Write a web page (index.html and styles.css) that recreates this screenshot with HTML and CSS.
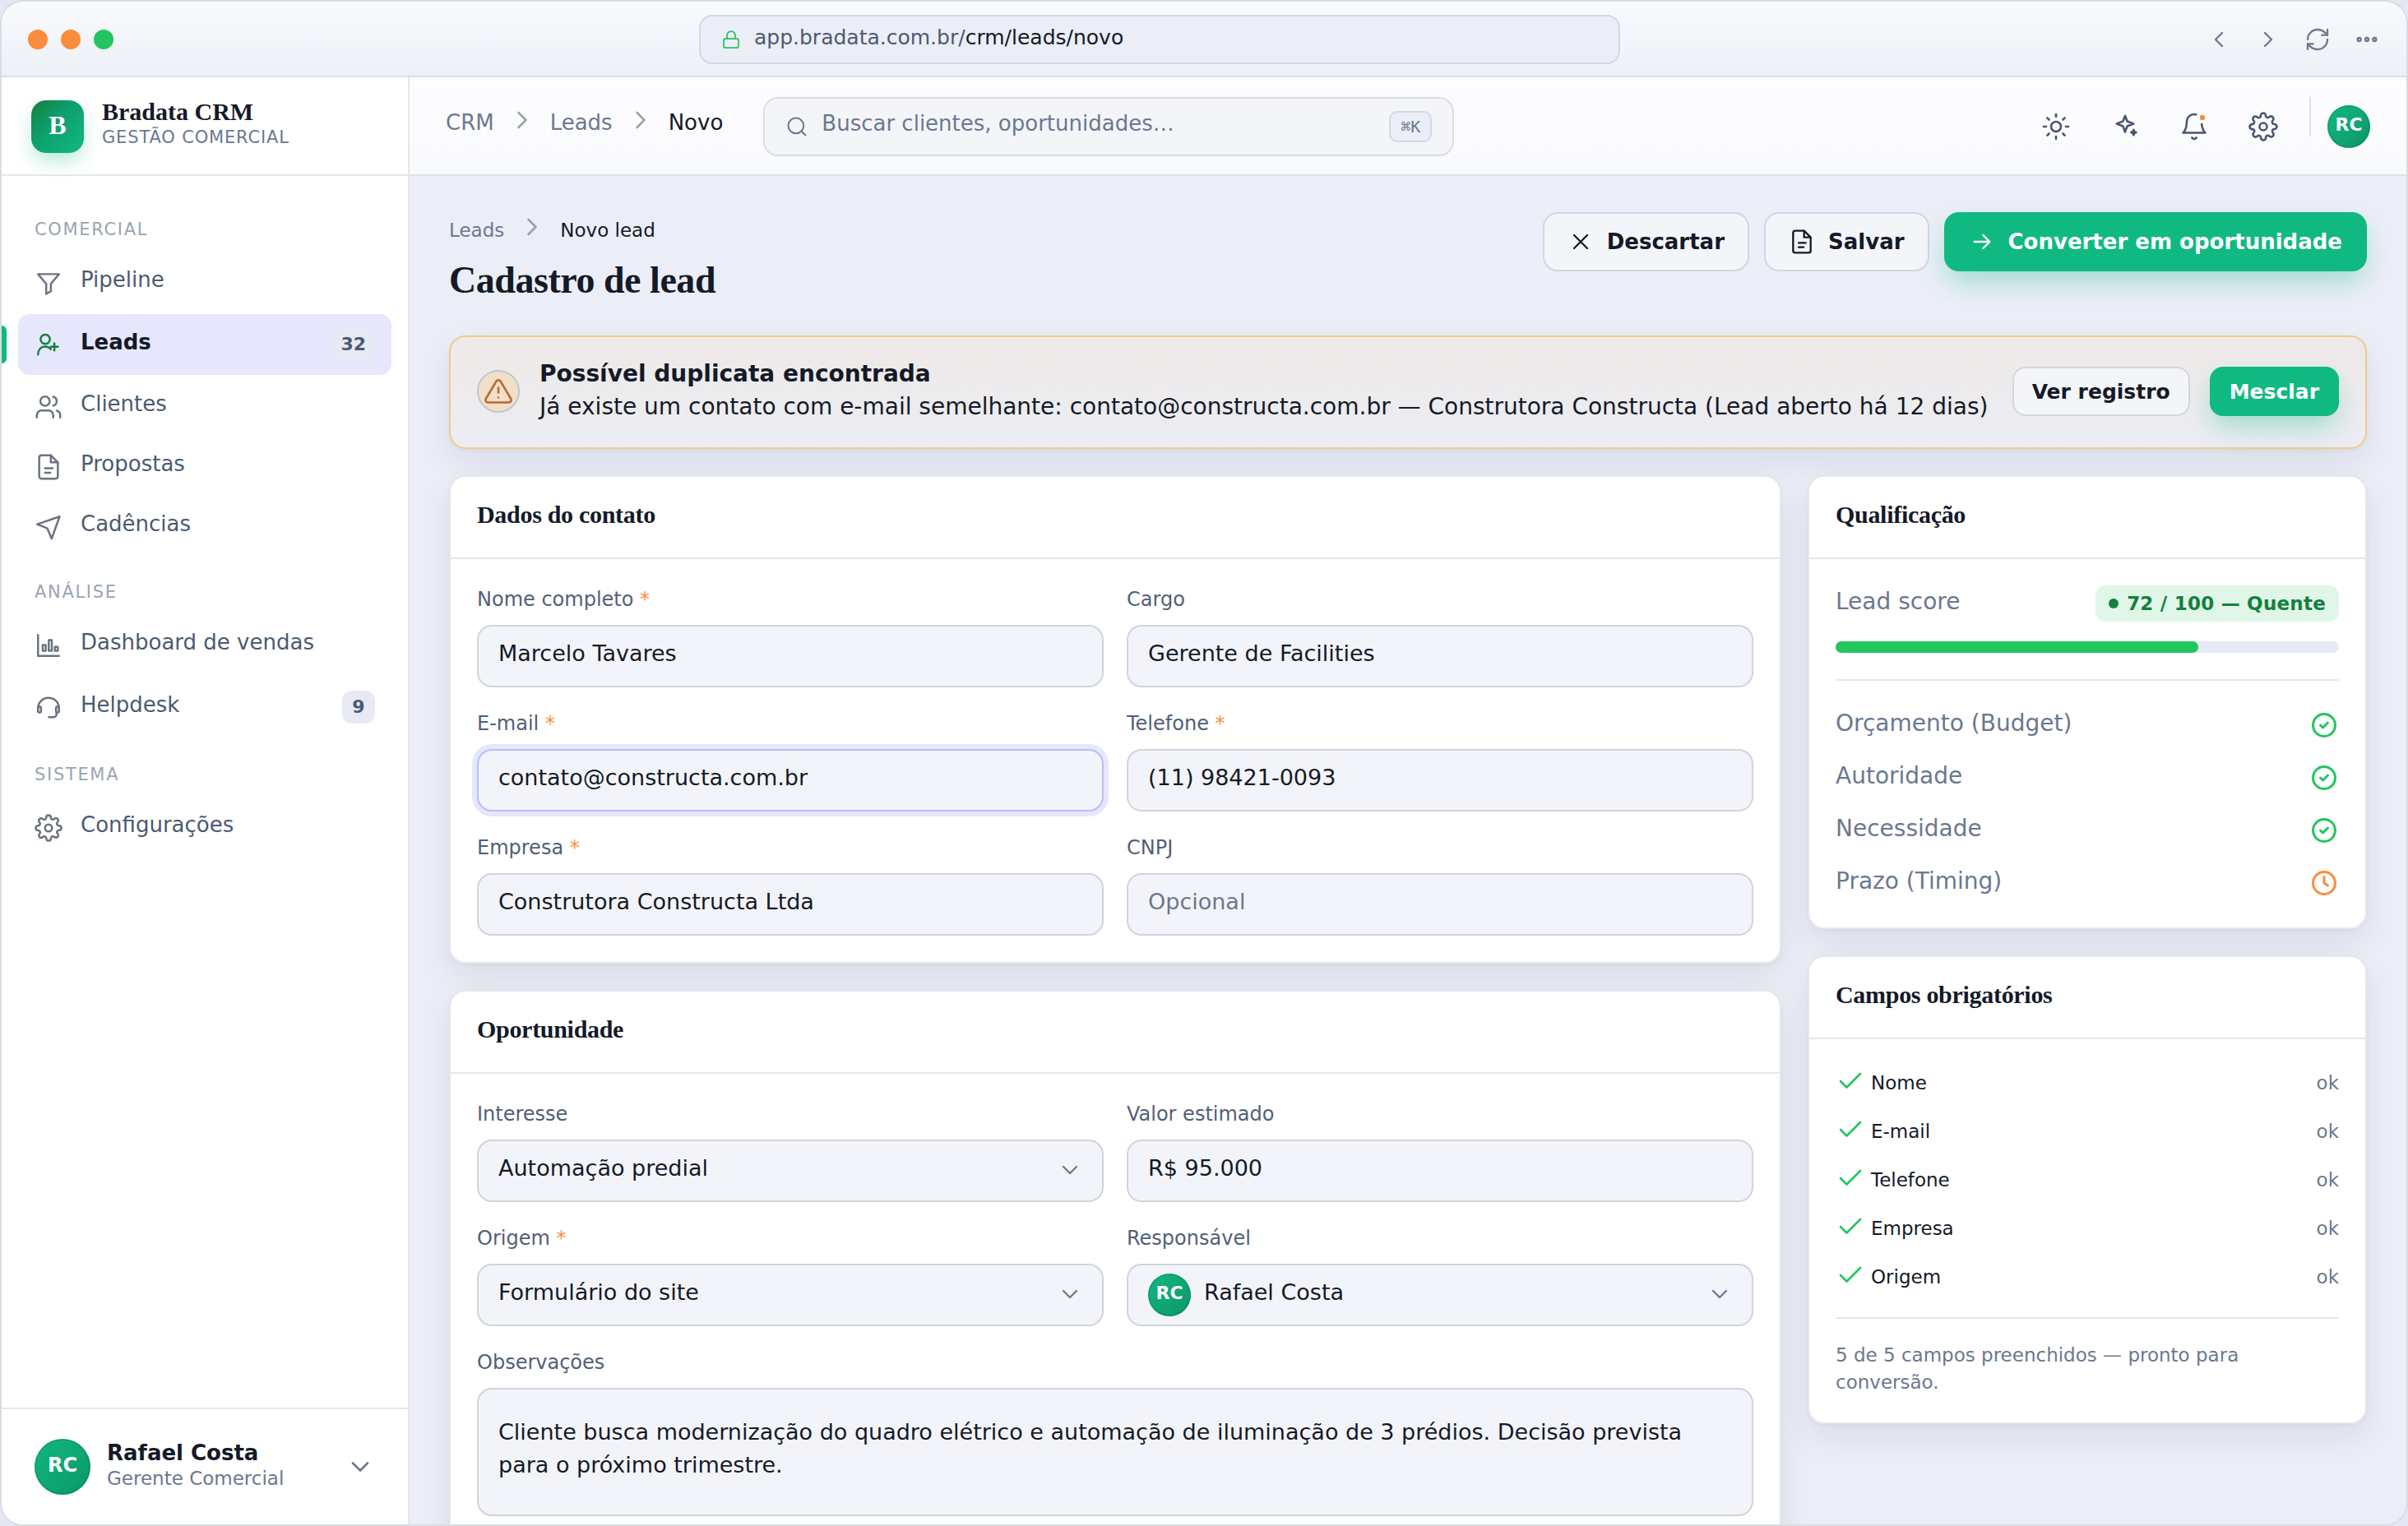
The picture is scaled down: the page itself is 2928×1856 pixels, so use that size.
FILE: index.html
```html
<!DOCTYPE html>
<html lang="pt-BR">
  <head>
    <meta charset="UTF-8" />
    <meta name="viewport" content="width=device-width, initial-scale=1.0" />
    <title>Bradata CRM - Novo lead</title>
    <link rel="stylesheet" href="styles.css">
  </head>
  <body>
    <!-- icon sprite -->
    <svg class="sprite" aria-hidden="true">
      <symbol id="i-lock" viewBox="0 0 24 24"><rect x="3" y="11" width="18" height="11" rx="2"/><path d="M7 11V7a5 5 0 0 1 10 0v4"/></symbol>
      <symbol id="i-left" viewBox="0 0 24 24"><path d="m15 18-6-6 6-6"/></symbol>
      <symbol id="i-right" viewBox="0 0 24 24"><path d="m9 18 6-6-6-6"/></symbol>
      <symbol id="i-down" viewBox="0 0 24 24"><path d="m6 9 6 6 6-6"/></symbol>
      <symbol id="i-refresh" viewBox="0 0 24 24"><path d="M3 12a9 9 0 0 1 9-9 9.75 9.75 0 0 1 6.74 2.74L21 8"/><path d="M21 3v5h-5"/><path d="M21 12a9 9 0 0 1-9 9 9.75 9.75 0 0 1-6.74-2.74L3 16"/><path d="M8 16H3v5"/></symbol>
      <symbol id="i-more" viewBox="0 0 24 24"><circle cx="5" cy="12" r="1.5"/><circle cx="12" cy="12" r="1.5"/><circle cx="19" cy="12" r="1.5"/></symbol>
      <symbol id="i-search" viewBox="0 0 24 24"><circle cx="11" cy="11" r="8"/><path d="m21 21-4.3-4.3"/></symbol>
      <symbol id="i-sun" viewBox="0 0 24 24"><circle cx="12" cy="12" r="4"/><path d="M12 2v2M12 20v2M4.93 4.93l1.41 1.41M17.66 17.66l1.41 1.41M2 12h2M20 12h2M6.34 17.66l-1.41 1.41M19.07 4.93l-1.41 1.41"/></symbol>
      <symbol id="i-spark" viewBox="0 0 24 24"><path d="M12 3.2l1.7 4.5 5.1 2-5.1 2-1.7 4.6-1.7-4.6-5.1-2 5.1-2z"/><path d="M18.9 14.6l.6 1.5 1.5.6-1.5.6-.6 1.5-.6-1.5-1.5-.6 1.5-.6z"/></symbol>
      <symbol id="i-bell" viewBox="0 0 24 24"><path d="M18 8A6 6 0 0 0 6 8c0 7-3 9-3 9h18s-3-2-3-9"/><path d="M13.73 21a2 2 0 0 1-3.46 0"/></symbol>
      <symbol id="i-gear" viewBox="0 0 24 24"><circle cx="12" cy="12" r="3"/><path d="M19.4 15a1.65 1.65 0 0 0 .33 1.82l.06.06a2 2 0 0 1 0 2.83 2 2 0 0 1-2.83 0l-.06-.06a1.65 1.65 0 0 0-1.82-.33 1.65 1.65 0 0 0-1 1.51V21a2 2 0 0 1-2 2 2 2 0 0 1-2-2v-.09A1.65 1.65 0 0 0 9 19.4a1.65 1.65 0 0 0-1.82.33l-.06.06a2 2 0 0 1-2.83 0 2 2 0 0 1 0-2.83l.06-.06a1.65 1.65 0 0 0 .33-1.82 1.65 1.65 0 0 0-1.51-1H3a2 2 0 0 1-2-2 2 2 0 0 1 2-2h.09A1.65 1.65 0 0 0 4.6 9a1.65 1.65 0 0 0-.33-1.82l-.06-.06a2 2 0 0 1 0-2.83 2 2 0 0 1 2.83 0l.06.06a1.65 1.65 0 0 0 1.82.33H9a1.65 1.65 0 0 0 1-1.51V3a2 2 0 0 1 2-2 2 2 0 0 1 2 2v.09a1.65 1.65 0 0 0 1 1.51 1.65 1.65 0 0 0 1.82-.33l.06-.06a2 2 0 0 1 2.83 0 2 2 0 0 1 0 2.83l-.06.06a1.65 1.65 0 0 0-.33 1.82V9a1.65 1.65 0 0 0 1.51 1H21a2 2 0 0 1 2 2 2 2 0 0 1-2 2h-.09a1.65 1.65 0 0 0-1.51 1z"/></symbol>
      <symbol id="i-funnel" viewBox="0 0 24 24"><path d="M3 4.5h18l-7 8.4v6.3l-4 2.3v-8.6z"/></symbol>
      <symbol id="i-lead" viewBox="0 0 24 24"><circle cx="9.2" cy="7.5" r="4"/><path d="M3 20.7c0-4.1 2.4-6.9 6.2-6.9 2.1 0 3.7.9 4.8 2.3"/><path d="M17 10.9v6.2M13.9 14h6.2"/></symbol>
      <symbol id="i-users" viewBox="0 0 24 24"><path d="M16 21v-2a4 4 0 0 0-4-4H6a4 4 0 0 0-4 4v2"/><circle cx="9" cy="7" r="4"/><path d="M22 21v-2a4 4 0 0 0-3-3.87"/><path d="M16 3.13a4 4 0 0 1 0 7.75"/></symbol>
      <symbol id="i-file" viewBox="0 0 24 24"><path d="M14 2H6a2 2 0 0 0-2 2v16a2 2 0 0 0 2 2h12a2 2 0 0 0 2-2V8z"/><path d="M14 2v6h6"/><path d="M9 13h6.5M9 17h4.5"/></symbol>
      <symbol id="i-send" viewBox="0 0 24 24"><path d="M2.3 9.6 21.5 3l-6.8 19-3.7-8.8z"/></symbol>
      <symbol id="i-chart" viewBox="0 0 24 24"><path d="M3 3v18h18"/><rect x="7" y="11.6" width="2.6" height="5"/><rect x="12.2" y="7.4" width="2.6" height="9.2"/><rect x="17.4" y="13.3" width="2.6" height="3.3"/></symbol>
      <symbol id="i-headset" viewBox="0 0 24 24"><path d="M3 13.5v-.5a9 9 0 0 1 18 0v.5"/><rect x="3" y="11.6" width="2.6" height="5" rx="1"/><rect x="18.4" y="11.6" width="2.6" height="5" rx="1"/><path d="M18.9 16.6v1.6a2.4 2.4 0 0 1-2.4 2.4h-4.2"/></symbol>
      <symbol id="i-x" viewBox="0 0 24 24"><path d="M18 6 6 18M6 6l12 12"/></symbol>
      <symbol id="i-arrow" viewBox="0 0 24 24"><path d="M5 12h14M13 6l6 6-6 6"/></symbol>
      <symbol id="i-alert" viewBox="0 0 24 24"><path d="M10.29 3.86 1.82 18a2 2 0 0 0 1.71 3h16.94a2 2 0 0 0 1.71-3L13.71 3.86a2 2 0 0 0-3.42 0z"/><path d="M12 9v4M12 17h.01"/></symbol>
      <symbol id="i-ok" viewBox="0 0 24 24"><circle cx="12" cy="12" r="9"/><path d="m9 12 2 2 4-4"/></symbol>
      <symbol id="i-clock" viewBox="0 0 24 24"><circle cx="12" cy="12" r="9"/><path d="M12 7v5l3 2"/></symbol>
      <symbol id="i-check" viewBox="0 0 24 24"><path d="M20 6 9 17l-5-5"/></symbol>
    </svg>

    <div class="window">
      <header class="chrome">
        <div class="dots"><span class="dot"></span><span class="dot"></span><span class="dot dot-green"></span></div>
        <div class="url">
          <svg class="icon icon-xs"><use href="#i-lock"/></svg>
          <span class="url-text">app.bradata.com.br/<b>crm/leads/novo</b></span>
        </div>
        <div class="chrome-nav">
          <svg class="icon icon-md"><use href="#i-left"/></svg>
          <svg class="icon icon-md"><use href="#i-right"/></svg>
          <svg class="icon icon-md"><use href="#i-refresh"/></svg>
          <svg class="icon icon-md"><use href="#i-more"/></svg>
        </div>
      </header>

      <div class="shell">
        <aside class="sidebar">
          <div class="brand">
            <div class="logo">B</div>
            <div>
              <div class="brand-name">Bradata CRM</div>
              <div class="brand-sub">GESTÃO COMERCIAL</div>
            </div>
          </div>

          <nav class="nav">
            <div class="nav-title">COMERCIAL</div>
            <a class="nav-item" href="#pipeline"><svg class="icon icon-nav"><use href="#i-funnel"/></svg><span class="nav-label">Pipeline</span></a>
            <a class="nav-item active" href="#leads"><svg class="icon icon-nav"><use href="#i-lead"/></svg><span class="nav-label">Leads</span><span class="count">32</span></a>
            <a class="nav-item" href="#clientes"><svg class="icon icon-nav"><use href="#i-users"/></svg><span class="nav-label">Clientes</span></a>
            <a class="nav-item" href="#propostas"><svg class="icon icon-nav"><use href="#i-file"/></svg><span class="nav-label">Propostas</span></a>
            <a class="nav-item" href="#cadencias"><svg class="icon icon-nav"><use href="#i-send"/></svg><span class="nav-label">Cadências</span></a>
            <div class="nav-title">ANÁLISE</div>
            <a class="nav-item" href="#dashboard"><svg class="icon icon-nav"><use href="#i-chart"/></svg><span class="nav-label">Dashboard de vendas</span></a>
            <a class="nav-item" href="#helpdesk"><svg class="icon icon-nav"><use href="#i-headset"/></svg><span class="nav-label">Helpdesk</span><span class="count">9</span></a>
            <div class="nav-title">SISTEMA</div>
            <a class="nav-item" href="#config"><svg class="icon icon-nav"><use href="#i-gear"/></svg><span class="nav-label">Configurações</span></a>
          </nav>

          <div class="user">
            <span class="avatar avatar-lg">RC</span>
            <div class="user-info">
              <div class="user-name">Rafael Costa</div>
              <div class="user-role">Gerente Comercial</div>
            </div>
            <svg class="icon icon-lg"><use href="#i-down"/></svg>
          </div>
        </aside>

        <main class="main">
          <div class="topbar">
            <div class="crumbs">
              <a href="#crm">CRM</a>
              <svg class="icon icon-lg"><use href="#i-right"/></svg>
              <a href="#leads">Leads</a>
              <svg class="icon icon-lg"><use href="#i-right"/></svg>
              <span class="current">Novo</span>
            </div>
            <label class="search">
              <svg class="icon icon-sm"><use href="#i-search"/></svg>
              <input type="search" placeholder="Buscar clientes, oportunidades…" aria-label="Buscar">
              <kbd>⌘K</kbd>
            </label>
            <div class="tools">
              <button class="tool" type="button" aria-label="Tema"><svg class="icon icon-lg"><use href="#i-sun"/></svg></button>
              <button class="tool" type="button" aria-label="Assistente"><svg class="icon icon-lg"><use href="#i-spark"/></svg></button>
              <button class="tool" type="button" aria-label="Notificações"><svg class="icon icon-lg"><use href="#i-bell"/></svg><span class="ping"></span></button>
              <button class="tool" type="button" aria-label="Ajustes"><svg class="icon icon-lg"><use href="#i-gear"/></svg></button>
            </div>
            <span class="sep"></span>
            <span class="avatar">RC</span>
          </div>

          <div class="content">
            <div class="page-head">
              <div>
                <div class="page-crumbs">
                  <a href="#leads">Leads</a>
                  <svg class="icon icon-lg"><use href="#i-right"/></svg>
                  <span class="current">Novo lead</span>
                </div>
                <h1>Cadastro de lead</h1>
              </div>
              <div class="actions">
                <button class="btn" type="button"><svg class="icon icon-md"><use href="#i-x"/></svg>Descartar</button>
                <button class="btn" type="button"><svg class="icon icon-md"><use href="#i-file"/></svg>Salvar</button>
                <button class="btn btn-primary" type="button"><svg class="icon icon-md"><use href="#i-arrow"/></svg>Converter em oportunidade</button>
              </div>
            </div>

            <section class="alert">
              <span class="alert-icon"><svg class="icon icon-lg"><use href="#i-alert"/></svg></span>
              <div class="alert-text">
                <strong>Possível duplicata encontrada</strong>
                <p>Já existe um contato com e-mail semelhante: contato@constructa.com.br — Construtora Constructa (Lead aberto há 12 dias)</p>
              </div>
              <button class="btn btn-sm" type="button">Ver registro</button>
              <button class="btn btn-sm btn-primary" type="button">Mesclar</button>
            </section>

            <div class="columns">
              <form class="col">
                <section class="card">
                  <h2>Dados do contato</h2>
                  <div class="fields">
                    <div class="field">
                      <label for="nome">Nome completo <i>*</i></label>
                      <input id="nome" type="text" value="Marcelo Tavares">
                    </div>
                    <div class="field">
                      <label for="cargo">Cargo</label>
                      <input id="cargo" type="text" value="Gerente de Facilities">
                    </div>
                    <div class="field">
                      <label for="email">E-mail <i>*</i></label>
                      <input id="email" class="is-active" type="text" value="contato@constructa.com.br">
                    </div>
                    <div class="field">
                      <label for="fone">Telefone <i>*</i></label>
                      <input id="fone" type="tel" value="(11) 98421-0093">
                    </div>
                    <div class="field">
                      <label for="empresa">Empresa <i>*</i></label>
                      <input id="empresa" type="text" value="Construtora Constructa Ltda">
                    </div>
                    <div class="field">
                      <label for="cnpj">CNPJ</label>
                      <input id="cnpj" type="text" placeholder="Opcional">
                    </div>
                  </div>
                </section>

                <section class="card">
                  <h2>Oportunidade</h2>
                  <div class="fields">
                    <div class="field">
                      <label for="interesse">Interesse</label>
                      <div class="select">
                        <select id="interesse"><option>Automação predial</option></select>
                        <svg class="icon icon-md"><use href="#i-down"/></svg>
                      </div>
                    </div>
                    <div class="field">
                      <label for="valor">Valor estimado</label>
                      <input id="valor" type="text" value="R$ 95.000">
                    </div>
                    <div class="field">
                      <label for="origem">Origem <i>*</i></label>
                      <div class="select">
                        <select id="origem"><option>Formulário do site</option></select>
                        <svg class="icon icon-md"><use href="#i-down"/></svg>
                      </div>
                    </div>
                    <div class="field">
                      <label for="resp">Responsável</label>
                      <div class="select select-user">
                        <select id="resp"><option>Rafael Costa</option></select>
                        <span class="avatar">RC</span>
                        <svg class="icon icon-md"><use href="#i-down"/></svg>
                      </div>
                    </div>
                    <div class="field field-wide">
                      <label for="obs">Observações</label>
                      <textarea id="obs">Cliente busca modernização do quadro elétrico e automação de iluminação de 3 prédios. Decisão prevista para o próximo trimestre.</textarea>
                    </div>
                  </div>
                </section>
              </form>

              <div class="col">
                <section class="card">
                  <h2>Qualificação</h2>
                  <div class="card-body">
                    <div class="row">
                      <span class="row-label">Lead score</span>
                      <span class="score"><span class="score-dot"></span>72 / 100 — Quente</span>
                    </div>
                    <div class="progress"><div class="bar" style="width: 72%"></div></div>
                    <hr>
                    <div class="bant">
                      <div class="row"><span class="row-label">Orçamento (Budget)</span><svg class="icon icon-lg ok"><use href="#i-ok"/></svg></div>
                      <div class="row"><span class="row-label">Autoridade</span><svg class="icon icon-lg ok"><use href="#i-ok"/></svg></div>
                      <div class="row"><span class="row-label">Necessidade</span><svg class="icon icon-lg ok"><use href="#i-ok"/></svg></div>
                      <div class="row"><span class="row-label">Prazo (Timing)</span><svg class="icon icon-lg wait"><use href="#i-clock"/></svg></div>
                    </div>
                  </div>
                </section>

                <section class="card">
                  <h2>Campos obrigatórios</h2>
                  <div class="card-body">
                    <ul class="checks">
                      <li><svg class="icon icon-lg ok"><use href="#i-check"/></svg><span>Nome</span><em>ok</em></li>
                      <li><svg class="icon icon-lg ok"><use href="#i-check"/></svg><span>E-mail</span><em>ok</em></li>
                      <li><svg class="icon icon-lg ok"><use href="#i-check"/></svg><span>Telefone</span><em>ok</em></li>
                      <li><svg class="icon icon-lg ok"><use href="#i-check"/></svg><span>Empresa</span><em>ok</em></li>
                      <li><svg class="icon icon-lg ok"><use href="#i-check"/></svg><span>Origem</span><em>ok</em></li>
                    </ul>
                    <hr>
                    <p class="note">5 de 5 campos preenchidos — pronto para conversão.</p>
                  </div>
                </section>
              </div>
            </div>
          </div>
        </main>
      </div>
    </div>
  </body>
</html>
```

FILE: styles.css
```css
* {
  margin: 0;
  padding: 0;
  box-sizing: border-box;
}
body {
  height: 100vh;
  background: #e5e7f5;
  font-family: "DejaVu Sans", sans-serif;
  font-size: 26px;
  color: #141a28;
}
a {
  color: inherit;
  text-decoration: none;
}
button, input, select, textarea {
  font: inherit;
  color: inherit;
}
.sprite {
  display: none;
}

/* icons */
.icon {
  flex: none;
  display: block;
  fill: none;
  stroke: currentColor;
  stroke-width: 1.75;
  stroke-linecap: round;
  stroke-linejoin: round;
  overflow: visible;
}
.icon-xs { width: 24px; height: 24px; }
.icon-sm { width: 28px; height: 28px; }
.icon-md { width: 32px; height: 32px; }
.icon-nav { width: 34px; height: 34px; }
.icon-lg { width: 36px; height: 36px; }
.ok { color: #22c55e; }
.wait { color: #fb8c3c; }

/* window */
.window {
  height: 100%;
  display: flex;
  flex-direction: column;
  border: 2px solid #dadce3;
  border-radius: 28px;
  overflow: hidden;
  background: #ebeef7;
}
.chrome {
  flex: none;
  display: flex;
  align-items: center;
  padding: 16px 32px 14px;
  border-bottom: 2px solid #dcdfe7;
  background: linear-gradient(#f9fafe, #edf0f6);
}
.dots {
  display: flex;
  gap: 16px;
}
.dot {
  width: 24px;
  height: 24px;
  border-radius: 50%;
  background: #fb8c3c;
}
.dot-green {
  background: #22c55e;
}
.url {
  flex: 1;
  max-width: 1120px;
  height: 60px;
  margin: 0 auto;
  padding: 0 25px;
  display: flex;
  align-items: center;
  gap: 16px;
  border: 2px solid #d5d8e2;
  border-radius: 16px;
  background: #ebeef7;
  color: #22c55e;
}
.url-text {
  padding-bottom: 6px;
  font-size: 25px;
  color: #4d5a70;
}
.url-text b {
  font-weight: normal;
  color: #141a28;
}
.chrome-nav {
  display: flex;
  gap: 28px;
  color: #6b7890;
}
.shell {
  flex: 1;
  min-height: 0;
  display: grid;
  grid-template-columns: 496px minmax(0, 1fr);
}

/* sidebar */
.sidebar {
  display: flex;
  flex-direction: column;
  border-right: 2px solid #e5e7eb;
  background: #fff;
}
.brand {
  display: flex;
  align-items: center;
  gap: 22px;
  height: 120px;
  padding: 2px 36px 0;
  border-bottom: 2px solid #e5e7eb;
}
.logo {
  width: 64px;
  height: 64px;
  border-radius: 18px;
  background: linear-gradient(135deg, #15803d, #0f9d6c 40%, #10b981);
  box-shadow: 0 12px 24px -4px rgba(16, 185, 129, 0.35);
  color: #fff;
  font: bold 32px/60px "Liberation Serif", serif;
  text-align: center;
}
.brand-name {
  font: bold 30px/34px "Liberation Serif", serif;
}
.brand-sub {
  padding-bottom: 8px;
  font-size: 21px;
  line-height: 28px;
  letter-spacing: 0.04em;
  color: #6b7890;
}
.nav {
  flex: 1;
  display: flex;
  flex-direction: column;
  gap: 4px;
  padding: 24px 20px;
}
.nav-title {
  padding: 29px 20px 13px;
  font-size: 21px;
  line-height: 25px;
  letter-spacing: 0.08em;
  color: #9aa4b2;
}
.nav-item {
  position: relative;
  display: flex;
  align-items: center;
  gap: 22px;
  padding: 17px 20px;
  border-radius: 14px;
  color: #6b7280;
}
.nav-label {
  flex: 1;
  padding-bottom: 6px;
  line-height: 29px;
  color: #4b5a72;
}
.active {
  background: #e6e7fc;
  color: #15803d;
}
.active .nav-label {
  font-weight: bold;
  color: #141a28;
}
/* green bar on the window edge */
.active::before {
  content: "";
  position: absolute;
  left: -20px;
  top: 14px;
  bottom: 14px;
  width: 6px;
  border-radius: 0 6px 6px 0;
  background: #10b981;
}
.count {
  min-width: 40px;
  padding: 0 11px;
  border-radius: 12px;
  background: #e7eaf2;
  color: #4b5a72;
  font-size: 22px;
  font-weight: bold;
  line-height: 40px;
  text-align: center;
}
.user {
  display: flex;
  align-items: center;
  gap: 20px;
  height: 142px;
  padding: 0 40px;
  border-top: 2px solid #e5e7eb;
  color: #6b7890;
}
.user-info {
  flex: 1;
  padding-bottom: 4px;
}
.user-name {
  font-weight: bold;
  line-height: 32px;
  color: #141a28;
}
.user-role {
  font-size: 23px;
  line-height: 30px;
}
.avatar {
  flex: none;
  width: 52px;
  height: 52px;
  padding-bottom: 4px;
  border-radius: 50%;
  background: linear-gradient(135deg, #10b981, #0d9668);
  box-shadow: inset 0 0 0 2px rgba(6, 95, 70, 0.2);
  color: #fff;
  font-size: 22px;
  font-weight: bold;
  line-height: 48px;
  text-align: center;
}
.avatar-lg {
  width: 68px;
  height: 68px;
  font-size: 24px;
  line-height: 64px;
}

/* topbar */
.main {
  min-height: 0;
  display: flex;
  flex-direction: column;
}
.topbar {
  flex: none;
  display: flex;
  align-items: center;
  padding: 24px 44px 22px;
  border-bottom: 2px solid #dfe2e9;
  background: linear-gradient(#fdfdff, #f9fafc);
}
.crumbs, .page-crumbs {
  display: flex;
  gap: 16px;
  color: #6b7890;
}
.crumbs {
  align-items: center;
  margin-right: 49px;
  padding-bottom: 10px;
}
.crumbs .icon, .page-crumbs .icon {
  color: #9aa1ae;
}
.crumbs .icon {
  margin-bottom: 6px;
}
.current {
  color: #141a28;
}
.search {
  flex: 0 1 840px;
  height: 72px;
  display: flex;
  align-items: center;
  gap: 16px;
  padding: 0 25px;
  border: 2px solid #dcdee4;
  border-radius: 18px;
  background: #f4f5f9;
  color: #6b7890;
}
.search input {
  flex: 1;
  min-width: 0;
  padding-bottom: 8px;
  border: 0;
  outline: 0;
  background: none;
}
.search input::placeholder {
  color: #6b7890;
}
kbd {
  padding: 0 12px;
  border: 2px solid #d5d8e2;
  border-radius: 10px;
  background: #ebeef7;
  font: 20px/34px "DejaVu Sans Mono", monospace;
}
.tools {
  display: flex;
  gap: 12px;
  margin-left: auto;
}
.tool {
  position: relative;
  width: 72px;
  height: 72px;
  display: grid;
  place-items: center;
  border: 0;
  background: none;
  color: #4b5670;
}
.ping {
  position: absolute;
  top: 22px;
  right: 23px;
  width: 6px;
  height: 6px;
  border-radius: 2px;
  background: #fb8c3c;
  box-shadow: 0 0 0 4px #fbfcfe;
}
.sep {
  align-self: flex-start;
  width: 2px;
  height: 48px;
  margin: 0 20px;
  background: #dfe2e9;
}

/* page */
.content {
  flex: 1;
  min-height: 0;
  overflow: hidden;
  padding: 44px 48px;
}
.page-head {
  display: flex;
  justify-content: space-between;
  margin-bottom: 41px;
}
.page-crumbs {
  font-size: 23px;
  line-height: 44px;
}
h1 {
  margin-top: 13px;
  font: bold 46px/52px "Liberation Serif", serif;
  letter-spacing: -0.01em;
}
.actions {
  display: flex;
  align-items: flex-start;
  gap: 18px;
}
.btn {
  flex: none;
  height: 72px;
  display: flex;
  align-items: center;
  gap: 16px;
  padding: 0 28px;
  border: 2px solid #d3d6de;
  border-radius: 18px;
  background: #f4f5f9;
  font-size: 26px;
  font-weight: bold;
}
.btn-sm {
  height: 60px;
  padding: 0 22px;
  border-radius: 16px;
  font-size: 25px;
}
.btn-primary {
  border-color: #10b981;
  background: #10b981;
  box-shadow: 0 16px 32px -4px rgba(16, 185, 129, 0.35);
  color: #fff;
}
.alert {
  display: flex;
  align-items: center;
  gap: 24px;
  height: 138px;
  margin-bottom: 32px;
  padding: 0 32px 2px;
  border: 2px solid #f1cb90;
  border-radius: 20px;
  background: linear-gradient(#efe9e7, #ebedf3);
  box-shadow: 0 2px 4px rgba(17, 24, 39, 0.04), 0 16px 40px rgba(17, 24, 39, 0.08);
}
.alert-icon {
  flex: none;
  width: 52px;
  height: 52px;
  display: grid;
  place-items: center;
  border: 2px solid #c5c5cc;
  border-radius: 50%;
  background: #f1dfc7;
  color: #b96b3c;
}
.alert-text {
  flex: 1;
  padding-bottom: 2px;
  font-size: 28px;
  line-height: 40px;
}
.alert-text strong {
  display: block;
}
.columns {
  display: grid;
  grid-template-columns: minmax(0, 1fr) 680px;
  align-items: start;
  gap: 32px;
}
.col {
  display: grid;
  gap: 32px;
}

/* cards */
.card {
  border: 2px solid #e5e7eb;
  border-radius: 20px;
  background: #fff;
  box-shadow: 0 2px 4px rgba(17, 24, 39, 0.04), 0 16px 40px rgba(17, 24, 39, 0.08);
}
.card h2 {
  padding: 28px 32px 34px;
  border-bottom: 2px solid #e5e7eb;
  font: bold 30px/36px "Liberation Serif", serif;
  letter-spacing: -0.01em;
}
.fields {
  display: grid;
  grid-template-columns: 1fr 1fr;
  gap: 27px 28px;
  padding: 32px;
}
.field-wide {
  grid-column: 1 / -1;
}
.field label {
  display: block;
  margin-bottom: 14px;
  font-size: 24px;
  line-height: 34px;
  color: #525f77;
}
.field i {
  font-style: normal;
  color: #fb8c3c;
}
.field input, .field select, .field textarea {
  display: block;
  width: 100%;
  height: 76px;
  padding: 0 24px 8px;
  border: 2px solid #d0d4dd;
  border-radius: 18px;
  outline: 0;
  background: #f3f4f9;
  font-size: 27px;
}
.field input::placeholder {
  color: #6b7890;
}
.field .is-active {
  border-color: #b9bdf7;
  box-shadow: 0 0 0 6px #e6e7fc;
}
.field textarea {
  height: 156px;
  padding: 32px 24px;
  line-height: 40px;
  resize: none;
  overflow: hidden;
}
.select {
  position: relative;
}
.select select {
  appearance: none;
}
.select .icon {
  position: absolute;
  right: 25px;
  top: 21px;
  color: #6b7890;
  pointer-events: none;
}
.select .avatar {
  position: absolute;
  left: 26px;
  top: 12px;
  pointer-events: none;
}
.select-user select {
  padding-left: 92px;
}
.card-body {
  padding: 32px;
}
hr {
  height: 2px;
  margin: 32px 0;
  border: 0;
  background: #e5e7eb;
}
.row {
  display: flex;
  justify-content: space-between;
  align-items: center;
  height: 44px;
}
.row .icon {
  stroke-width: 2;
}
.row-label {
  padding-bottom: 4px;
  font-size: 28px;
  line-height: 40px;
  color: #6b7890;
}
.score {
  display: flex;
  align-items: center;
  gap: 10px;
  padding: 0 16px;
  border-radius: 12px;
  background: #e0f6e9;
  color: #15803d;
  font-size: 23px;
  font-weight: bold;
  line-height: 44px;
  letter-spacing: 0.01em;
}
.score-dot {
  width: 12px;
  height: 12px;
  border-radius: 50%;
  background: currentColor;
}
.progress {
  height: 14px;
  margin-top: 24px;
  border-radius: 7px;
  background: #e7eaf2;
}
.bar {
  height: 100%;
  border-radius: 7px;
  background: #22c55e;
}
.bant {
  display: grid;
  gap: 20px;
}
.checks {
  display: grid;
  gap: 21px;
  list-style: none;
}
.checks li {
  display: flex;
  align-items: center;
  gap: 7px;
  height: 38px;
  font-size: 23px;
}
.checks span, .checks em {
  padding-top: 4px;
}
.checks em {
  margin-left: auto;
  font-style: normal;
  color: #6b7890;
}
.note {
  margin-top: -4px;
  font-size: 23px;
  line-height: 33px;
  color: #6b7890;
}
```
